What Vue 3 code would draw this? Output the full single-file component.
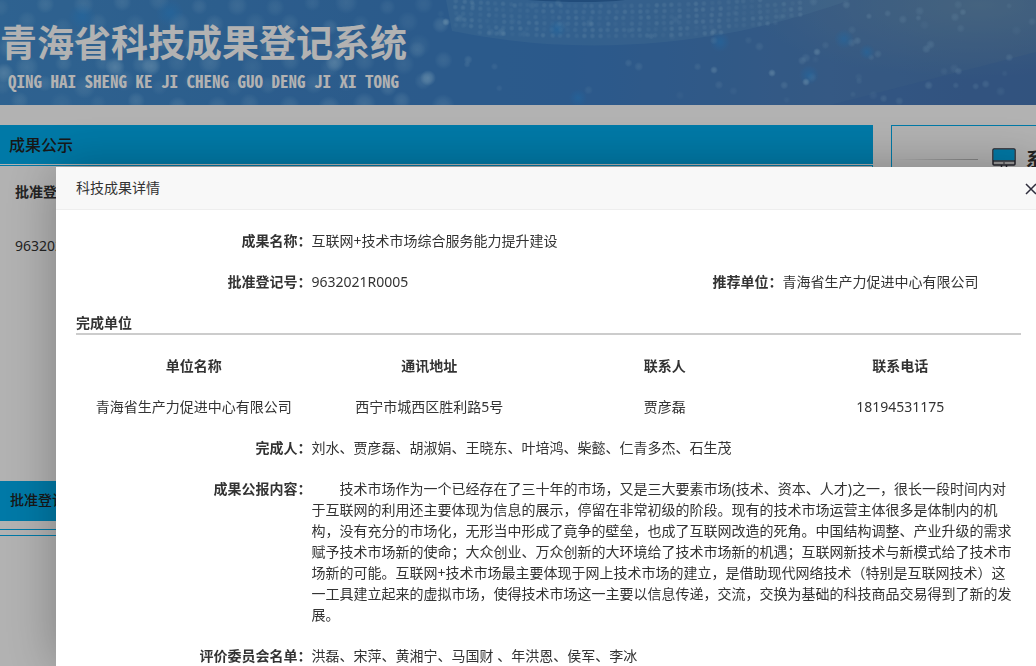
<script setup>
const units = [
  { name: '青海省生产力促进中心有限公司', address: '西宁市城西区胜利路5号', contact: '贾彦磊', phone: '18194531175' }
]
const summary =
  '技术市场作为一个已经存在了三十年的市场，又是三大要素市场(技术、资本、人才)之一，很长一段时间内对于互联网的利用还主要体现为信息的展示，停留在非常初级的阶段。现有的技术市场运营主体很多是体制内的机构，没有充分的市场化，无形当中形成了竟争的壁垒，也成了互联网改造的死角。中国结构调整、产业升级的需求赋予技术市场新的使命；大众创业、万众创新的大环境给了技术市场新的机遇；互联网新技术与新模式给了技术市场新的可能。互联网+技术市场最主要体现于网上技术市场的建立，是借助现代网络技术（特别是互联网技术）这一工具建立起来的虚拟市场，使得技术市场这一主要以信息传递，交流，交换为基础的科技商品交易得到了新的发展。'

// Repeatable pseudo-random numbers for the banner's light spots
let seed = 7
const rand = () => {
  seed = (seed * 16807) % 2147483647
  return seed / 2147483647
}
const bokeh = []
for (let row = 0; row < 6; row++) {
  for (let col = 0; col < 12; col++) {
    bokeh.push({
      x: col * 38 + (row % 2) * 18 + rand() * 10,
      y: row * 20 + rand() * 8,
      r: 8 + rand() * 4,
      o: 0.12 + rand() * 0.16
    })
  }
}
const sparks = Array.from({ length: 80 }, () => ({
  x: 440 + rand() * 596,
  y: rand() * 105,
  r: 3 + rand() * 2,
  o: 0.08 + rand() * 0.2
}))
const mesh = []
for (let row = 0; row < 6; row++) {
  for (let col = 0; col < 44; col++) {
    const x = 455 + col * 8 + rand() * 2
    const t = (x - 600) / 245
    const y = 3 + row * 6 + 3 - t * t * 14
    if (y > 0 && y < 41 - t * t * 34) mesh.push({ x, y, o: 0.08 + rand() * 0.2 })
  }
}
const glows = [
  { x: 115, y: 67, r: 10, o: 0.5 }, { x: 151, y: 66, r: 10, o: 0.5 }, { x: 335, y: 62, r: 10, o: 0.5 },
  { x: 4, y: 73, r: 10, o: 0.45 }, { x: 428, y: 78, r: 8, o: 0.55 }, { x: 288, y: 36, r: 10, o: 0.4 },
  { x: 417, y: 50, r: 9, o: 0.22 }, { x: 446, y: 22, r: 4, o: 0.6 }, { x: 772, y: 73, r: 4, o: 0.5 },
  { x: 806, y: 82, r: 4, o: 0.5 }, { x: 817, y: 52, r: 4, o: 0.45 }, { x: 714, y: 70, r: 4, o: 0.4 }
]
const cyan = [
  { x: 170, y: 13, r: 14 }, { x: 82, y: 17, r: 14 }, { x: 720, y: 42, r: 10 }, { x: 844, y: 39, r: 10 },
  { x: 809, y: 75, r: 10 }, { x: 578, y: 98, r: 9 }, { x: 557, y: 29, r: 9 }, { x: 867, y: 52, r: 8 }
]
</script>

<template>
  <div class="page">
    <header class="banner">
      <svg class="sky" viewBox="0 0 1036 105" preserveAspectRatio="xMidYMid slice" aria-hidden="true">
        <defs>
          <linearGradient id="base" x1="0" x2="1" y1="0" y2="0">
            <stop offset="0" stop-color="#438dce" />
            <stop offset="0.35" stop-color="#3e83c8" />
            <stop offset="0.55" stop-color="#3e80c8" />
            <stop offset="0.8" stop-color="#4c80bd" />
            <stop offset="1" stop-color="#4c7ab4" />
          </linearGradient>
          <radialGradient id="haze">
            <stop offset="0" stop-color="#6d96b6" stop-opacity="0.7" />
            <stop offset="1" stop-color="#6d96b6" stop-opacity="0" />
          </radialGradient>
          <radialGradient id="spot">
            <stop offset="0" stop-color="#a9dcff" />
            <stop offset="0.5" stop-color="#a9dcff" stop-opacity="0.7" />
            <stop offset="1" stop-color="#a9dcff" stop-opacity="0" />
          </radialGradient>
          <radialGradient id="cyan">
            <stop offset="0" stop-color="#2f95e8" stop-opacity="0.55" />
            <stop offset="1" stop-color="#2f95e8" stop-opacity="0" />
          </radialGradient>
        </defs>
        <rect width="1036" height="105" fill="url(#base)" />
        <ellipse cx="980" cy="5" rx="230" ry="75" fill="url(#haze)" />
        <path d="M830 105L1036 52V105Z" fill="#3f70b8" opacity="0.3" />
        <path d="M446 0L452 31Q590 60 740 31Q800 18 850 0Z" fill="#7ab2dc" opacity="0.2" />
        <path d="M528 0Q590 4 625 0Z" fill="#1f5c9c" opacity="0.6" />
        <circle v-for="(b, i) in bokeh" :key="'b' + i" :cx="b.x" :cy="b.y" :r="b.r" fill="url(#spot)" :opacity="b.o" />
        <circle v-for="(m, i) in mesh" :key="'m' + i" :cx="m.x" :cy="m.y" r="3" fill="url(#spot)" :opacity="m.o" />
        <circle v-for="(s, i) in sparks" :key="'s' + i" :cx="s.x" :cy="s.y" :r="s.r" fill="url(#spot)" :opacity="s.o" />
        <circle v-for="(c, i) in cyan" :key="'c' + i" :cx="c.x" :cy="c.y" :r="c.r" fill="url(#cyan)" />
        <circle v-for="(g, i) in glows" :key="'g' + i" :cx="g.x" :cy="g.y" :r="g.r" fill="url(#spot)" :opacity="g.o" />
      </svg>
      <div class="brand">
        <h1>青海省科技成果登记系统</h1>
        <p>QING HAI SHENG KE JI CHENG GUO DENG JI XI TONG</p>
      </div>
    </header>

    <main class="columns">
      <section class="notices">
        <h2 class="bar">成果公示</h2>
        <div class="panel list">
          <table>
            <thead><tr><th>批准登记号</th></tr></thead>
            <tbody><tr><td>9632021R0005</td></tr></tbody>
          </table>
          <div class="subbar">批准登记号</div>
        </div>
        <div class="panel rest"></div>
      </section>
      <aside class="side">
        <div class="side-head">
          <span class="fade"></span>
          <svg class="monitor" width="24" height="22" viewBox="0 0 24 22" aria-hidden="true">
            <rect x="1" y="1" width="22" height="16" rx="1" fill="#dddddd" stroke="#30303c" stroke-width="1.5" />
            <path d="M1.5 1.5H22.5V12.5H1.5Z" fill="#00aeef" />
            <path d="M1 13H23" stroke="#30303c" stroke-width="1.3" />
            <circle cx="12" cy="15" r="0.8" fill="#30303c" />
            <path d="M9.5 17V20M14.5 17V20M7 21H17" stroke="#30303c" stroke-width="1.5" />
          </svg>
          <strong>系</strong>
        </div>
      </aside>
    </main>
  </div>

  <div class="shade"></div>

  <div class="dialog" role="dialog" aria-modal="true" aria-labelledby="dialog-title">
    <div class="dialog-head">
      <h2 id="dialog-title">科技成果详情</h2>
      <button type="button" class="close" aria-label="关闭">
        <svg width="12" height="12" viewBox="0 0 12 12" aria-hidden="true">
          <path d="M1 1L11 11M11 1L1 11" stroke="#2e2d3c" stroke-width="1.5" />
        </svg>
      </button>
    </div>
    <div class="dialog-body">
      <dl class="fields">
        <dt>成果名称：</dt>
        <dd class="wide">互联网+技术市场综合服务能力提升建设</dd>
        <dt>批准登记号：</dt>
        <dd>9632021R0005</dd>
        <dt>推荐单位：</dt>
        <dd>青海省生产力促进中心有限公司</dd>
      </dl>
      <h3>完成单位</h3>
      <table class="units">
        <thead>
          <tr><th>单位名称</th><th>通讯地址</th><th>联系人</th><th>联系电话</th></tr>
        </thead>
        <tbody>
          <tr v-for="u in units" :key="u.phone">
            <td>{{ u.name }}</td><td>{{ u.address }}</td><td>{{ u.contact }}</td><td>{{ u.phone }}</td>
          </tr>
        </tbody>
      </table>
      <dl class="fields">
        <dt>完成人：</dt>
        <dd class="wide">刘水、贾彦磊、胡淑娟、王晓东、叶培鸿、柴懿、仁青多杰、石生茂</dd>
        <dt>成果公报内容：</dt>
        <dd class="wide summary">{{ summary }}</dd>
        <dt>评价委员会名单：</dt>
        <dd class="wide">洪磊、宋萍、黄湘宁、马国财 、年洪恩、侯军、李冰</dd>
      </dl>
    </div>
  </div>
</template>

<style>
html,
body {
  overflow: hidden;
  background: #fff;
}
</style>

<style scoped>
.page,
.dialog {
  font-family: "Noto Sans", "Noto Sans CJK SC", sans-serif;
  font-size: 14px;
  line-height: 21px;
  color: #333;
}
h1, h2, h3, p, dl, dd {
  margin: 0;
}
.page {
  display: flex;
  flex-direction: column;
  height: 100vh;
  overflow: hidden;
}
.banner {
  position: relative;
  flex: none;
  height: 105px;
  overflow: hidden;
  background: #4084c8;
}
.sky {
  position: absolute;
  inset: 0;
  width: 100%;
  height: 100%;
}
.brand {
  position: relative;
  width: max-content;
  padding-top: 18px;
  color: #fff;
}
.brand h1 {
  font-family: "Noto Sans CJK SC", sans-serif;
  font-size: 37px;
  font-weight: 700;
  line-height: 46px;
  white-space: nowrap;
}
.brand p {
  font-family: "Noto Sans Mono CJK SC", "Liberation Mono", monospace;
  font-size: 17px;
  font-weight: 700;
  line-height: 34px;
  text-align: center;
  white-space: nowrap;
}
.columns {
  flex: 1;
  min-height: 0;
  display: grid;
  grid-template-columns: minmax(0, 1fr) 145px;
  gap: 18px;
  padding-top: 20px;
}
.notices {
  display: flex;
  flex-direction: column;
}
.bar {
  flex: none;
  margin-bottom: 1px;
  padding: 1px 9px 0;
  background: #00aeef;
  color: #222;
  font-size: 16px;
  font-weight: 500;
  line-height: 38px;
}
.panel {
  border: 1px solid #00aeef;
  border-left: 0;
}
.list {
  flex: none;
  display: flex;
  flex-direction: column;
  justify-content: space-between;
  height: 355px;
  padding-bottom: 8px;
}
.list table {
  border-spacing: 0;
}
.list th,
.list td {
  height: 50px;
  padding: 0 15px 4px;
  text-align: left;
}
.subbar {
  padding: 0 10px 2px;
  background: #00aeef;
  color: #222;
  font-weight: 500;
  line-height: 38px;
}
.rest {
  flex: 1;
  margin-top: 5px;
  border-bottom: 0;
}
.side {
  border: 1px solid #00aeef;
  border-width: 1px 0 0 1px;
  overflow: hidden;
}
.side-head {
  display: flex;
  align-items: center;
  height: 66px;
  padding-left: 4px;
  white-space: nowrap;
}
.fade {
  flex: none;
  width: 82px;
  height: 1px;
  margin-right: 14px;
  background: linear-gradient(to right, #fff, #bbb);
}
.monitor {
  flex: none;
  margin-right: 10px;
}
.side-head strong {
  font-size: 18px;
}
.shade {
  position: fixed;
  inset: 0;
  background: rgba(0, 0, 0, 0.3);
}
.dialog {
  position: fixed;
  top: 167px;
  left: 56px;
  right: -5px;
  bottom: 0;
  display: flex;
  flex-direction: column;
  background: #fff;
  box-shadow: 1px 1px 50px rgba(0, 0, 0, 0.3);
}
.dialog-head {
  flex: none;
  display: flex;
  align-items: center;
  justify-content: space-between;
  height: 42px;
  padding: 0 4px 0 20px;
  border-bottom: 1px solid #eee;
  background: #f8f8f8;
}
.dialog-head h2 {
  padding-bottom: 2px;
  font-size: 14px;
  font-weight: 400;
}
.close {
  display: flex;
  padding: 2px 0 0;
  border: 0;
  background: none;
}
.dialog-body {
  flex: 1;
  min-height: 0;
  padding: 10px 20px 0;
  overflow: hidden;
}
.fields {
  display: grid;
  grid-template-columns: repeat(4, 1fr);
  padding-right: 3px;
}
.fields dt,
.fields dd {
  padding: 10px 0;
}
.fields dt {
  font-weight: 700;
  text-align: right;
}
.wide {
  grid-column: span 3;
}
.summary {
  text-indent: 28px;
}
h3 {
  margin: 10px 0;
  border-bottom: 2px solid #ccc;
  font-size: 14px;
  font-weight: 700;
}
.units {
  width: calc(100% - 3px);
  border-spacing: 0;
  table-layout: fixed;
}
.units th,
.units td {
  padding: 10px 0;
  text-align: center;
}
</style>
